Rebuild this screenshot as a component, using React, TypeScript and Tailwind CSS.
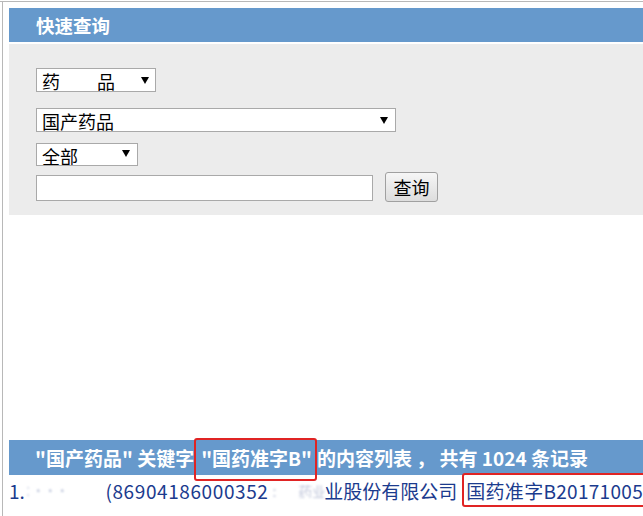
import React from "react";

const Arrow = () => (
  <svg width="8" height="7" viewBox="0 0 8 7" className="block">
    <polygon points="0,0 8,0 4,7" fill="#000" />
  </svg>
);

export default function App() {
  const cjk = { fontFamily: '"Noto Sans CJK SC", "Noto Sans", sans-serif' };
  return (
    <div className="w-[643px] h-[516px] bg-white overflow-hidden pt-[1px]" style={cjk}>
      <div className="h-full border-t border-[#b8b8b8]">
        <div className="ml-[2px] h-full border-l border-[#b8b8b8] pl-[6px] pt-[6px] flex flex-col">
          {/* header */}
          <div className="h-[34px] bg-[#6699cc] flex items-center pl-[27px] text-white font-bold text-[18.5px] leading-none">
            快速查询
          </div>
          <div className="mt-[2px] bg-[#ececec] h-[171px] pl-[27px] pt-[24px] flex flex-col items-start">
            {/* select 1 */}
            <div className="w-[120px] h-[24px] bg-white border border-[#a9a9a9] overflow-hidden relative">
              <div className="pl-[5px] pt-[3px] text-[18px] leading-[18px] text-black flex">
                <span>药</span>
                <span className="ml-[37px]">品</span>
              </div>
              <div className="absolute left-[104px] top-[8px]">
                <Arrow />
              </div>
            </div>
            {/* select 2 */}
            <div className="mt-[16px] w-[360px] h-[24px] bg-white border border-[#a9a9a9] overflow-hidden relative">
              <div className="pl-[5px] pt-[3px] text-[18px] leading-[18px] text-black">国产药品</div>
              <div className="absolute left-[343px] top-[8px]">
                <Arrow />
              </div>
            </div>
            {/* select 3 */}
            <div className="mt-[11px] w-[102px] h-[23px] bg-white border border-[#a9a9a9] overflow-hidden relative">
              <div className="pl-[5px] pt-[3px] text-[18px] leading-[18px] text-black">全部</div>
              <div className="absolute left-[85px] top-[6px]">
                <Arrow />
              </div>
            </div>
            {/* input row */}
            <div className="mt-[6px] flex items-start">
              <div className="mt-[3px] w-[337px] h-[26px] bg-white border border-[#a9a9a9]" />
              <div className="ml-[12px] w-[53px] h-[30px] rounded-[3px] border border-[#a0a0a0] bg-gradient-to-b from-[#f6f6f6] to-[#dddddd] flex items-center justify-center text-[18px] leading-none text-black">
                查询
              </div>
            </div>
          </div>
          {/* spacer */}
          <div className="h-[225px]" />
          {/* result header */}
          <div className="h-[35px] bg-[#6699cc] flex items-center pl-[26px] text-white font-bold text-[19px] leading-none whitespace-nowrap">
            <span>"国产药品" 关键字</span>
            <span className="relative ml-[7px]">
              "国药准字B"
              <span className="absolute left-[-7px] right-[-5px] top-[-10px] bottom-[-14px] border-[2px] border-[#e02424] rounded-[3px]" />
            </span>
            <span className="ml-[5px]">的内容列表 ， 共有 1024 条记录</span>
          </div>
          {/* row */}
          <div className="mt-[6px] flex items-center text-[19px] leading-none text-[#1b3b8e] whitespace-nowrap">
            <span>1.</span>
            <span className="w-[84px] overflow-hidden text-[#b8c0d8] blur-[1px] text-[12px] pl-[2px]">⁚ ··· &nbsp;&nbsp;&nbsp;&nbsp;&nbsp;&nbsp;&nbsp;&nbsp;&nbsp;&nbsp; ··_</span>
            <span className="tracking-[0.6px]">(86904186000352</span>
            <span className="w-[58px] overflow-hidden text-[#c0c6da] blur-[1px] text-[14px] pl-[4px]">: &nbsp;&nbsp;&nbsp;&nbsp;&nbsp; 药业</span>
            <span>业股份有限公司</span>
            <span className="relative ml-[9px]">
              <span className="tracking-[0.3px]">国药准字B20171005</span>
              <span className="absolute left-[-4px] right-[-8px] top-[-8px] bottom-[-7px] border-[2px] border-[#e02424] rounded-[3px]" />
            </span>
          </div>
        </div>
      </div>
    </div>
  );
}
